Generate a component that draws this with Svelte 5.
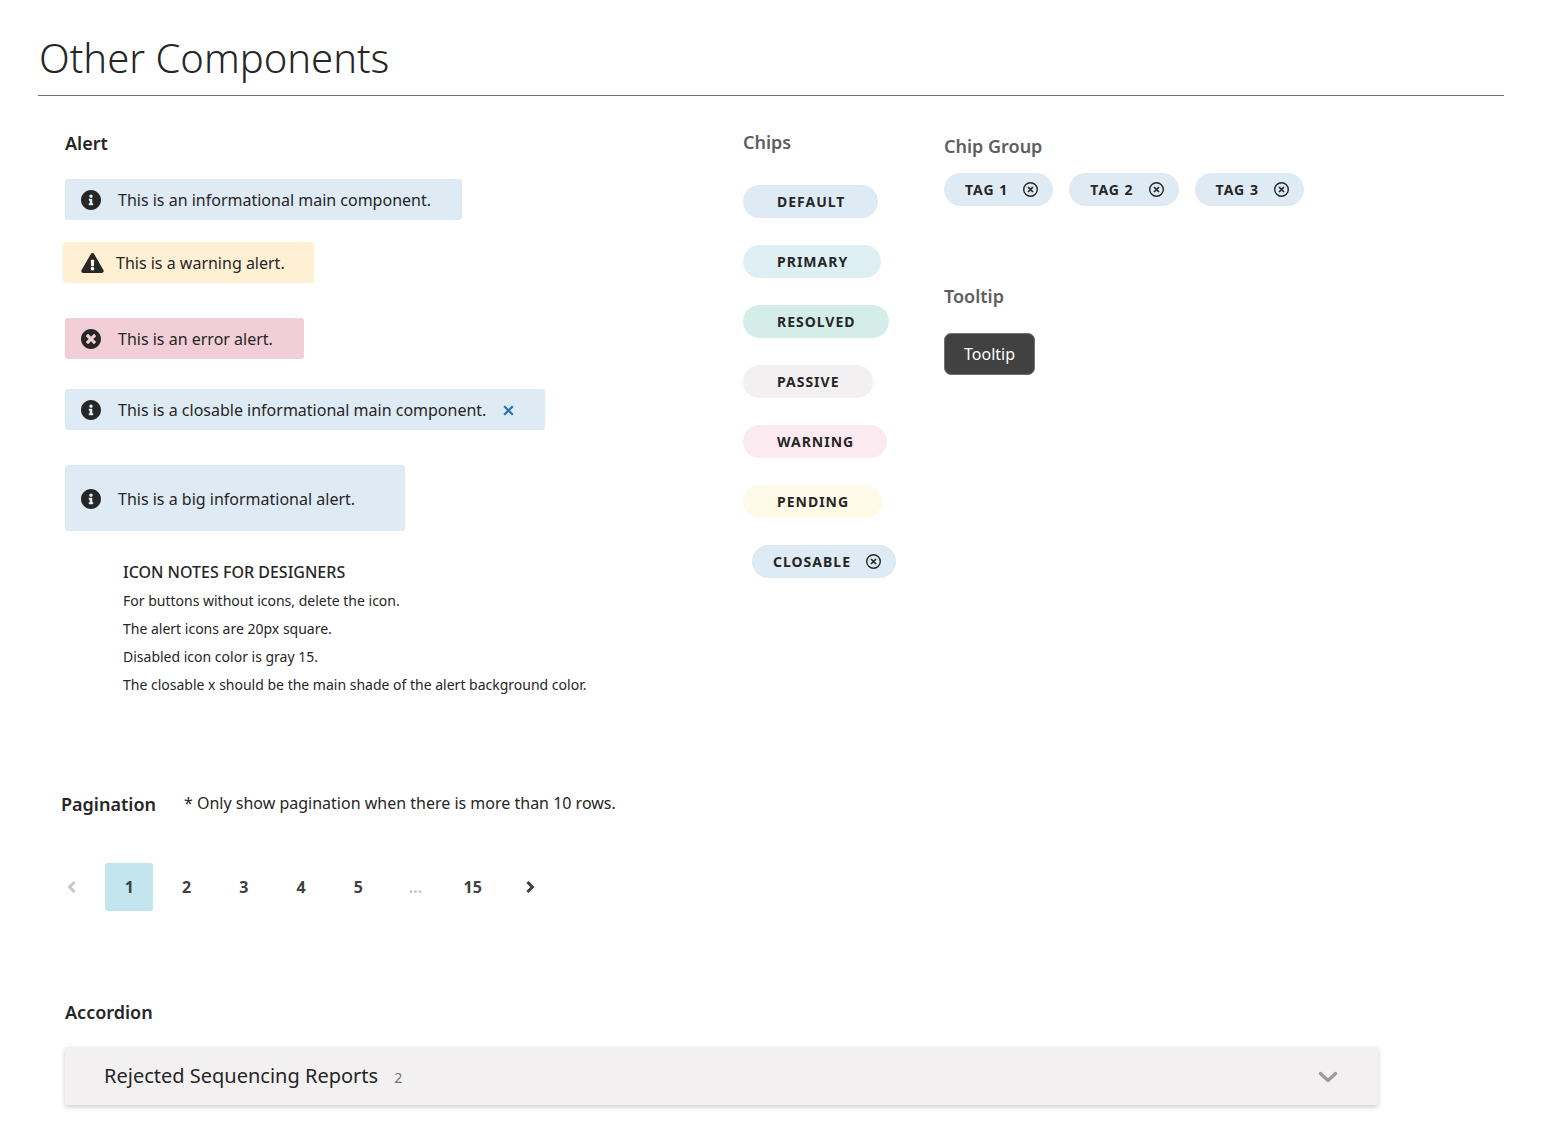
<script>
  const chips = [
    { label: 'DEFAULT', tone: 'default' },
    { label: 'PRIMARY', tone: 'primary' },
    { label: 'RESOLVED', tone: 'resolved' },
    { label: 'PASSIVE', tone: 'passive' },
    { label: 'WARNING', tone: 'warning' },
    { label: 'PENDING', tone: 'pending' }
  ];
  const tags = ['TAG 1', 'TAG 2', 'TAG 3'];
  const notes = [
    'For buttons without icons, delete the icon.',
    'The alert icons are 20px square.',
    'Disabled icon color is gray 15.',
    'The closable x should be the main shade of the alert background color.'
  ];
  const pages = [1, 2, 3, 4, 5, '...', 15];
  let current = $state(1);
  let open = $state(false);
</script>

{#snippet infoIcon()}
  <svg width="20" height="20" viewBox="8 8 496 496" aria-hidden="true"><path d="M256 8C119.043 8 8 119.083 8 256c0 136.997 111.043 248 248 248s248-111.003 248-248C504 119.083 392.957 8 256 8zm0 110c23.196 0 42 18.804 42 42s-18.804 42-42 42-42-18.804-42-42 18.804-42 42-42zm56 254c0 6.627-5.373 12-12 12h-88c-6.627 0-12-5.373-12-12v-24c0-6.627 5.373-12 12-12h12v-64h-12c-6.627 0-12-5.373-12-12v-24c0-6.627 5.373-12 12-12h64c6.627 0 12 5.373 12 12v100h12c6.627 0 12 5.373 12 12v24z" /></svg>
{/snippet}

{#snippet closeCircle()}
  <svg width="15" height="15" viewBox="0 0 15 15" aria-hidden="true"><circle cx="7.5" cy="7.5" r="6.8" fill="none" stroke="currentColor" stroke-width="1.4" /><path d="M5 5l5 5M10 5l-5 5" stroke="currentColor" stroke-width="1.7" /></svg>
{/snippet}

<header>
  <h1>Other Components</h1>
</header>

<main>
  <div class="columns">
    <section class="alerts">
      <h2>Alert</h2>
      <div class="alert info">
        <span class="icon">{@render infoIcon()}</span>This is an informational main component.
      </div>
      <div class="alert caution">
        <span class="icon"><svg width="23" height="20" viewBox="0 0 576 512" aria-hidden="true"><path d="M569.517 440.013C587.975 472.007 564.806 512 527.94 512H48.054c-36.937 0-59.999-40.055-41.577-71.987L246.423 23.985c18.467-32.009 64.72-31.951 83.154 0l239.94 416.028zM288 354c-25.405 0-46 20.595-46 46s20.595 46 46 46 46-20.595 46-46-20.595-46-46-46zm-43.673-165.346l7.418 136c.347 6.364 5.609 11.346 11.982 11.346h48.546c6.373 0 11.635-4.982 11.982-11.346l7.418-136c.375-6.874-5.098-12.654-11.982-12.654h-63.383c-6.884 0-12.356 5.78-11.981 12.654z" /></svg></span>This is a warning alert.
      </div>
      <div class="alert error">
        <span class="icon"><svg width="20" height="20" viewBox="8 8 496 496" aria-hidden="true"><path d="M256 8C119 8 8 119 8 256s111 248 248 248 248-111 248-248S393 8 256 8zm121.6 313.1c4.7 4.7 4.7 12.3 0 17L338 377.6c-4.7 4.7-12.3 4.7-17 0L256 312l-65.1 65.6c-4.7 4.7-12.3 4.7-17 0L134.4 338c-4.7-4.7-4.7-12.3 0-17l65.6-65-65.6-65.1c-4.7-4.7-4.7-12.3 0-17l39.6-39.6c4.7-4.7 12.3-4.7 17 0l65 65.7 65.1-65.6c4.7-4.7 12.3-4.7 17 0l39.6 39.6c4.7 4.7 4.7 12.3 0 17L312 256l65.6 65.1z" /></svg></span>This is an error alert.
      </div>
      <div class="alert info closable">
        <span class="icon">{@render infoIcon()}</span>This is a closable informational main component.
        <button class="dismiss" aria-label="Close alert">
          <svg width="11" height="11" viewBox="0 0 11 11" aria-hidden="true"><path d="M1.2 1.2l8.6 8.6M9.8 1.2l-8.6 8.6" stroke="currentColor" stroke-width="2.2" /></svg>
        </button>
      </div>
      <div class="alert info big">
        <span class="icon">{@render infoIcon()}</span>This is a big informational alert.
      </div>
      <div class="notes">
        <h3>ICON NOTES FOR DESIGNERS</h3>
        {#each notes as note}
          <p>{note}</p>
        {/each}
      </div>
    </section>

    <section class="chips">
      <h2 class="muted">Chips</h2>
      {#each chips as chip}
        <span class="chip {chip.tone}">{chip.label}</span>
      {/each}
      <span class="chip default removable indented">CLOSABLE<button class="remove" aria-label="Remove closable chip">{@render closeCircle()}</button></span>
    </section>

    <div class="extras">
      <section>
        <h2 class="muted">Chip Group</h2>
        <div class="tags">
          {#each tags as tag}
            <span class="chip default removable">{tag}<button class="remove" aria-label="Remove {tag}">{@render closeCircle()}</button></span>
          {/each}
        </div>
      </section>
      <section class="tips">
        <h2 class="muted">Tooltip</h2>
        <div class="tooltip" role="tooltip">Tooltip</div>
      </section>
    </div>
  </div>

  <section class="pagination">
    <div class="caption">
      <h2>Pagination</h2>
      <p>* Only show pagination when there is more than 10 rows.</p>
    </div>
    <nav aria-label="Pagination">
      <button class="page" disabled aria-label="Previous page">
        <svg width="10" height="14" viewBox="0 0 10 14" aria-hidden="true"><path d="M7.6 2L2.6 7l5 5" fill="none" stroke="currentColor" stroke-width="3" /></svg>
      </button>
      {#each pages as page}
        {#if page === '...'}
          <span class="page ellipsis">...</span>
        {:else}
          <button class="page" class:active={page === current} aria-current={page === current ? 'page' : undefined} onclick={() => (current = page)}>{page}</button>
        {/if}
      {/each}
      <button class="page" aria-label="Next page">
        <svg width="10" height="14" viewBox="0 0 10 14" aria-hidden="true"><path d="M2.4 2l5 5-5 5" fill="none" stroke="currentColor" stroke-width="3" /></svg>
      </button>
    </nav>
  </section>

  <section class="accordion">
    <h2>Accordion</h2>
    <button class="panel" aria-expanded={open} onclick={() => (open = !open)}>
      <span>Rejected Sequencing Reports</span>
      <span class="count">2</span>
      <svg width="20" height="14" viewBox="0 0 20 14" aria-hidden="true"><path d="M2.5 4.5L10 11.5l7.5-7" fill="none" stroke="currentColor" stroke-width="3.4" stroke-linecap="round" /></svg>
    </button>
  </section>
</main>

<style>
  :global(body) {
    background: #fff;
    color: #262626;
    font: 16px/24px 'Noto Sans', sans-serif;
  }
  h1, h2, h3, p { margin: 0; }
  button {
    border: 0;
    padding: 0;
    background: none;
    color: inherit;
    font: inherit;
    cursor: pointer;
  }
  svg { display: block; flex: none; }
  header {
    margin: 0 56px 0 38px;
    padding: 28px 0 7px 1px;
    border-bottom: 1px solid #707070;
  }
  h1 { font-size: 40px; line-height: 60px; font-weight: 300; }
  h2 { font-size: 18px; line-height: 24px; font-weight: 650; }
  .muted { color: #5e5e5e; }
  .columns {
    display: grid;
    grid-template-columns: 678fr 201fr 559fr;
    margin: 0 57px 0 65px;
  }
  .alerts { padding-top: 35px; display: flex; flex-direction: column; align-items: flex-start; }
  .alert {
    display: flex;
    align-items: center;
    padding: 9px 31px 8px 16px;
    border-radius: 3px;
    white-space: nowrap;
  }
  .icon { width: 37px; fill: #262626; }
  .info { margin-top: 24px; background: #deeaf4; }
  .caution { margin: 22px 0 0 -2px; padding: 9px 29px 8px 18px; background: #fff0d4; }
  .caution .icon { width: 35px; }
  .error { margin-top: 35px; background: #f2ced8; }
  .closable { margin-top: 30px; }
  .dismiss { margin-left: 17px; color: #2672aa; }
  .big { margin-top: 35px; padding: 22px 50px 20px 16px; }
  .notes { margin: 26px 0 0 58px; font-size: 14px; line-height: 28px; }
  h3 { font-size: 16px; line-height: 30px; font-weight: 500; }
  .chips { padding-top: 34px; display: flex; flex-direction: column; align-items: flex-start; gap: 27px; }
  .chips h2 { margin-bottom: 4px; }
  .chip {
    padding: 0 33px 0 34px;
    border-radius: 17px;
    font-size: 14px;
    line-height: 33px;
    font-weight: 700;
    letter-spacing: 1px;
    white-space: nowrap;
  }
  .default { background: #deeaf4; }
  .primary { background: #dff0f5; }
  .resolved { background: #d5ede8; }
  .passive { background: #f3f0f2; }
  .warning { background: #fbebf1; }
  .pending { background: #fff9e8; }
  .removable { display: flex; align-items: center; gap: 15px; padding: 0 15px 0 21px; }
  .indented { margin-left: 9px; }
  .extras { padding-top: 38px; }
  .tags { display: flex; flex-wrap: wrap; gap: 16px; margin-top: 15px; }
  .tips { margin-top: 78px; }
  .tooltip {
    width: fit-content;
    margin-top: 25px;
    padding: 8px 19px;
    border: 1px solid #707070;
    border-radius: 7px;
    background: #414141;
    color: #fff;
  }
  .pagination { margin: 92px 0 0 48px; }
  .caption { display: flex; gap: 28px; margin-left: 13px; }
  .caption h2 { line-height: 26px; }
  nav { display: flex; justify-content: space-between; max-width: 506px; margin-top: 46px; }
  .page {
    display: flex;
    align-items: center;
    justify-content: center;
    width: 48px;
    height: 48px;
    border-radius: 3px;
    color: #414141;
    font-weight: 700;
  }
  .page:disabled, .ellipsis { color: #c8c8c8; }
  .active { background: #c2e5ee; }
  .accordion { margin: 89px 182px 0 65px; padding-bottom: 38px; }
  .panel {
    display: flex;
    align-items: center;
    width: 100%;
    margin-top: 23px;
    padding: 14px 40px 14px 39px;
    background: #f3f0f2;
    box-shadow: 0 2px 5px rgba(0, 0, 0, 0.2);
    font-size: 20px;
    line-height: 30px;
    text-align: left;
  }
  .count { margin-left: 16px; padding-top: 3px; flex: 1; color: #707070; font-size: 14px; line-height: 24px; }
  .panel svg { color: #9c9c9c; }
</style>
